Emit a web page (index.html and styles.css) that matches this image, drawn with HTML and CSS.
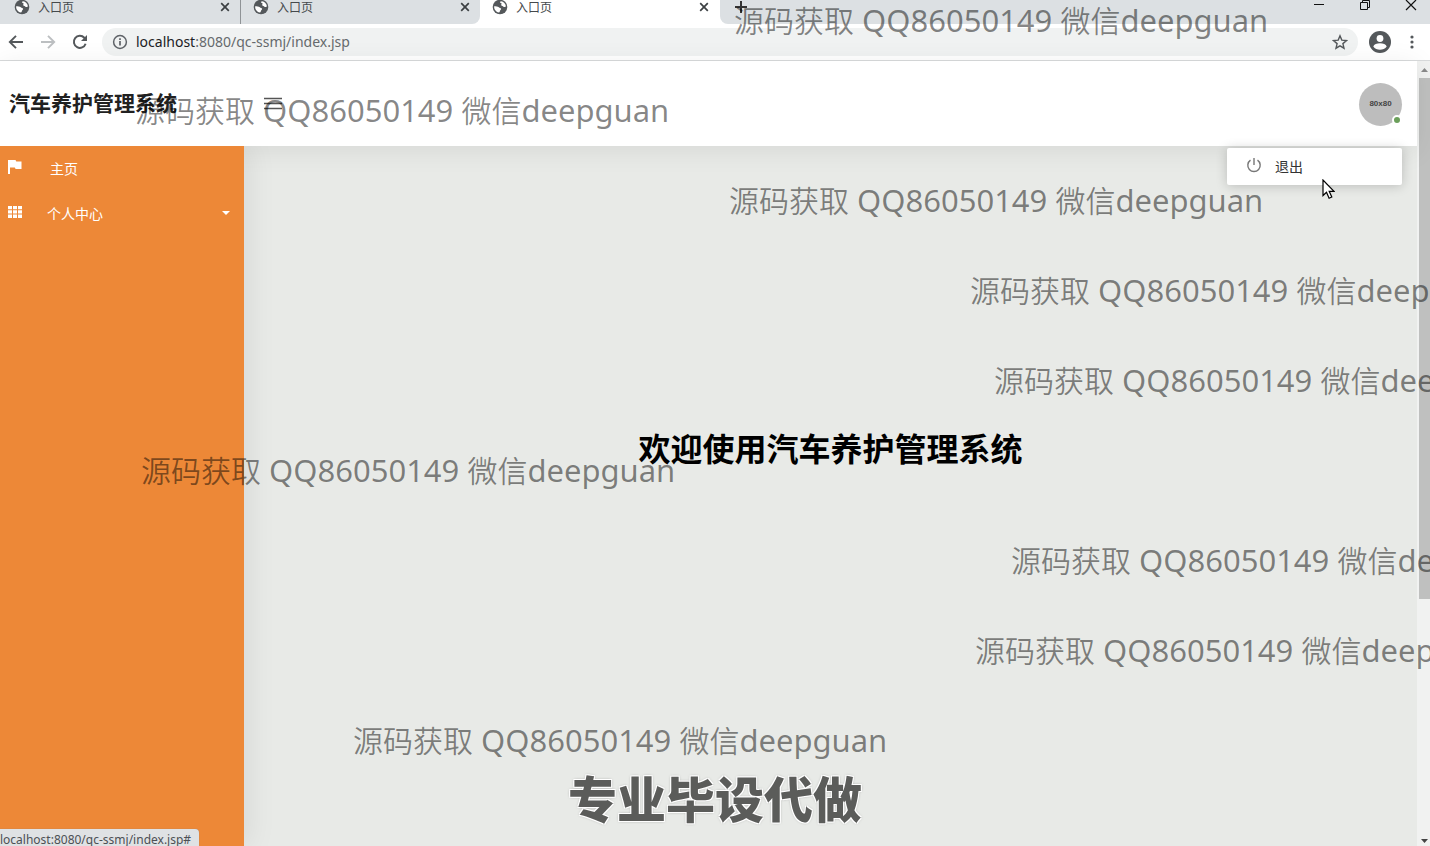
FILE: index.html
```html
<!DOCTYPE html>
<html lang="zh-CN">
<head>
<meta charset="utf-8">
<title>入口页</title>
<link rel="stylesheet" href="styles.css">
</head>
<body>
<svg class="defs" aria-hidden="true">
  <symbol id="globe" viewBox="0 0 16 16"><circle cx="8" cy="8" r="7.3" fill="#54585b"/><path d="M9 2.2c2.6.3 4.7 2.4 4.9 5-.8.9-1.7 1.2-2.5.5-.5-.7-1.5-.4-2-1.1-.6-.9.3-1.5.1-2.2-.2-.6-1.2-.2-1.4-.8C7.900 3 8.300 2.300 9 2.200zM2.200 7.200c1.600 0 3.700.1 4.600 1 .7.9 2 .7 2.300 1.600.2.900-.8 1.100-1.100 1.900-.2.700-.2 1.600-1.100 1.900C4.200 13.100 2.100 10.700 2.100 8z" fill="#fff"/></symbol>
  <symbol id="close" viewBox="0 0 10 10"><path d="M1.200 1.200l7.600 7.600M8.800 1.200L1.200 8.800" stroke="#3c4043" stroke-width="1.700"/></symbol>
</svg>
<div class="window">
  <div class="tabs">
    <div class="tab"><svg class="fav"><use href="#globe"/></svg><span class="name">入口页</span><button class="x" aria-label="关闭"><svg><use href="#close"/></svg></button></div>
    <div class="tab divided"><svg class="fav"><use href="#globe"/></svg><span class="name">入口页</span><button class="x" aria-label="关闭"><svg><use href="#close"/></svg></button></div>
    <div class="tab active"><svg class="fav"><use href="#globe"/></svg><span class="name">入口页</span><button class="x" aria-label="关闭"><svg><use href="#close"/></svg></button></div>
    <div class="rest">
      <button class="plus" aria-label="新标签页"><svg width="12" height="12" viewBox="0 0 12 12"><path d="M6 0v12M0 6h12" stroke="#333" stroke-width="2"/></svg></button>
      <div class="controls">
        <button aria-label="最小化"><svg width="12" height="12" viewBox="0 0 12 12"><path d="M1 5.500h10" stroke="#111"/></svg></button>
        <button aria-label="还原"><svg width="12" height="12" viewBox="0 0 12 12"><path d="M1.500 3.500h7v7h-7zM3.500 3V1.500h7v7H9" fill="none" stroke="#111"/></svg></button>
        <button aria-label="关闭窗口"><svg width="12" height="12" viewBox="0 0 12 12"><path d="M1 1l10 10M11 1L1 11" stroke="#111" stroke-width="1.200"/></svg></button>
      </div>
    </div>
  </div>
  <div class="toolbar">
    <button aria-label="后退"><svg width="16" height="16" viewBox="0 0 16 16"><path d="M15 8H2M8 1.800L1.800 8 8 14.200" fill="none" stroke="#54585b" stroke-width="1.900"/></svg></button>
    <button aria-label="前进"><svg width="16" height="16" viewBox="0 0 16 16"><path d="M1 8h13M8 1.800L14.200 8 8 14.200" fill="none" stroke="#bcbfc1" stroke-width="1.900"/></svg></button>
    <button aria-label="刷新"><svg width="16" height="16" viewBox="0 0 16 16"><path d="M13.600 9.700A6 6 0 1 1 12.300 3.800L14 5.500" fill="none" stroke="#54585b" stroke-width="2"/><path d="M15 1v6H9z" fill="#54585b"/></svg></button>
    <div class="omnibox">
      <svg width="16" height="16" viewBox="0 0 16 16"><circle cx="8" cy="8" r="6.400" fill="none" stroke="#5f6368" stroke-width="1.500"/><path d="M8 7v4.500M8 4.300v1.700" stroke="#5f6368" stroke-width="1.700"/></svg>
      <a class="url" href="#"><b>localhost</b>:8080/qc-ssmj/index.jsp</a>
      <button class="star" aria-label="收藏"><svg width="16" height="16" viewBox="0 0 16 16"><path d="M8 1.800l1.800 4.300 4.700.4-3.600 3.100 1.100 4.600L8 11.800l-4 2.400 1.100-4.600L1.500 6.500l4.700-.4z" fill="none" stroke="#54585b" stroke-width="1.400"/></svg></button>
    </div>
    <button class="person" aria-label="用户"><svg width="22" height="22" viewBox="0 0 22 22"><circle cx="11" cy="11" r="11" fill="#54585b"/><circle cx="11" cy="7.500" r="3.400" fill="#fff"/><path d="M4.300 15.500c1.200-4.300 12.200-4.300 13.400 0-2.800 4.300-10.600 4.300-13.400 0z" fill="#fff"/></svg></button>
    <button class="more" aria-label="菜单"><svg width="4" height="14" viewBox="0 0 4 14"><g fill="#54585b"><circle cx="2" cy="2" r="1.600"/><circle cx="2" cy="7" r="1.600"/><circle cx="2" cy="12" r="1.600"/></g></svg></button>
  </div>
  <div class="viewport">
    <div class="page">
      <header class="header">
        <h1>汽车养护管理系统</h1>
        <button class="burger" aria-label="切换菜单"><svg width="18" height="14" viewBox="0 0 18 14"><path d="M0 1.500h18M0 6.500h18M0 11.500h18" stroke="#555" stroke-width="1.500"/></svg></button>
        <div class="account">
          <button class="avatar">80x80</button>
          <i class="online"></i>
          <a class="logout" href="#"><svg width="16" height="16" viewBox="0 0 16 16"><path d="M4.500 2.200a6.200 6.200 0 1 0 7 0M8 0v7" fill="none" stroke="#777" stroke-width="1.400"/></svg>退出</a>
        </div>
      </header>
      <div class="body">
        <nav class="side">
          <a class="home" href="#"><svg width="14" height="14" viewBox="0 0 14 14"><path d="M0 0h7.500l.8 1.600H13.500V9H7.600l-.8-1.600H2V14H0z" fill="#fff"/></svg><span>主页</span></a>
          <a href="#"><svg width="14" height="14" viewBox="0 0 14 14"><path d="M0 1h4v3.300H0zM5 1h4v3.300H5zM10 1h4v3.300h-4zM0 5.300h4v3.300H0zM5 5.300h4v3.300H5zM10 5.300h4v3.300h-4zM0 9.600h4V13H0zM5 9.600h4V13H5zM10 9.600h4V13h-4z" fill="#fff"/></svg><span>个人中心</span><svg class="caret" width="8" height="4" viewBox="0 0 8 4"><path d="M0 0h8L4 4z" fill="#fff"/></svg></a>
        </nav>
        <main class="main"><h2>欢迎使用汽车养护管理系统</h2></main>
      </div>
    </div>
    <div class="scroll">
      <svg width="7" height="4" viewBox="0 0 7 4"><path d="M0 4h7L3.500 0z" fill="#8a8a8a"/></svg>
      <div class="track"><div class="thumb"></div></div>
      <svg width="7" height="4" viewBox="0 0 7 4"><path d="M0 0h7L3.500 4z" fill="#444"/></svg>
    </div>
  </div>
  <div class="status">localhost:8080/qc-ssmj/index.jsp#</div>
  <div class="marks">
    <p class="mark m1">源码获取<span> QQ86050149 </span>微信<span>deepguan</span></p>
    <p class="mark m2">源码获取<span> QQ86050149 </span>微信<span>deepguan</span></p>
    <p class="mark m3">源码获取<span> QQ86050149 </span>微信<span>deepguan</span></p>
    <p class="mark m4">源码获取<span> QQ86050149 </span>微信<span>deepguan</span></p>
    <p class="mark m5">源码获取<span> QQ86050149 </span>微信<span>deepguan</span></p>
    <p class="mark m6">源码获取<span> QQ86050149 </span>微信<span>deepguan</span></p>
    <p class="mark m7">源码获取<span> QQ86050149 </span>微信<span>deepguan</span></p>
    <p class="mark m8">源码获取<span> QQ86050149 </span>微信<span>deepguan</span></p>
    <p class="mark m9">源码获取<span> QQ86050149 </span>微信<span>deepguan</span></p>
    <p class="caption">专业毕设代做</p>
    <svg class="cursor" width="13" height="21" viewBox="0 0 13 21"><path d="M1 1v15.500l3.500-3.300 2.600 6 2.700-1.200-2.600-5.700H12z" fill="#fff" stroke="#000" stroke-width="1.200"/></svg>
  </div>
</div>
</body>
</html>
```

FILE: styles.css
```css
* { box-sizing: border-box; }
body { margin: 0; font-family: "Noto Sans", "Noto Sans CJK SC", sans-serif; }
button { border: 0; padding: 0; background: none; font: inherit; display: flex; align-items: center; justify-content: center; }
a { color: inherit; text-decoration: none; }
h1, h2, p { margin: 0; }
.defs { position: absolute; width: 0; height: 0; }
.window { position: relative; height: 100vh; display: flex; flex-direction: column; overflow: hidden; background: #fff; }

/* browser frame */
.tabs { display: flex; height: 24px; flex: none; background: #fff; }
.tab { width: 240px; flex: none; display: flex; align-items: center; padding: 0 10px 10px 14px; background: #dce0e3; font-size: 12px; line-height: 14px; color: #45494c; }
.divided { padding-left: 13px; border-radius: 0 0 8px 0; box-shadow: inset 2px 0 0 -1px #8f9396; }
.active { padding: 0 11px 10px 12px; background: #fff; }
.fav { width: 16px; height: 16px; margin-right: 8px; flex: none; }
.name { flex: 1; padding-top: 1px; }
.x, .x svg { width: 10px; height: 10px; }
.rest { flex: 1; display: flex; justify-content: space-between; align-items: flex-start; padding-left: 15px; background: #dce0e3; border-radius: 0 0 0 8px; }
.plus { height: 14px; }
.controls { display: flex; gap: 34px; padding-right: 13px; }
.controls button { height: 10px; }
.toolbar { height: 37px; flex: none; display: flex; align-items: center; gap: 16px; padding: 0 16px 0 8px; border-bottom: 1px solid #d8dadb; background: #fff; }
.omnibox { flex: 1; height: 28px; display: flex; align-items: center; gap: 8px; margin-left: -2px; padding: 0 10px; border-radius: 14px; background: #f0f2f2; }
.url { flex: 1; font-size: 14px; line-height: 20px; color: #666a6d; }
.url b { font-weight: 400; color: #202124; }
.person { margin: 0 3px 0 -5px; }

/* page */
.viewport { flex: 1; min-height: 0; display: flex; }
.page { flex: 1; min-width: 0; display: flex; flex-direction: column; }
.header { position: relative; z-index: 2; height: 85px; flex: none; display: flex; align-items: center; padding: 1px 15px 0 9px; background: #fff; box-shadow: 0 4px 28px rgba(0, 0, 0, .08); }
.header h1 { padding-bottom: 2px; font-size: 21px; line-height: 30px; font-weight: 700; color: #212121; }
.burger { margin-left: 87px; }
.account { position: relative; margin-left: auto; }
.avatar { width: 43px; height: 43px; border-radius: 50%; background: #bdbdbd; color: #444; font: 700 8px/10px "Liberation Sans", sans-serif; }
.online { position: absolute; right: 0; bottom: 1px; width: 10px; height: 10px; border: 2px solid #fff; border-radius: 50%; background: #6b9f5a; }
.logout { position: absolute; top: 65px; right: 0; width: 175px; height: 37px; display: flex; align-items: center; gap: 13px; padding-left: 19px; border-radius: 2px; background: #fff; box-shadow: 0 1px 12px rgba(0, 0, 0, .2); font-size: 14px; color: #333; }
.body { flex: 1; min-height: 0; display: flex; }
.side { position: relative; z-index: 3; width: 244px; flex: none; background: #ed8837; color: #fff; font-size: 14px; line-height: 20px; box-shadow: 4px 0 28px rgba(0, 0, 0, .08); clip-path: inset(0 -40px 0 0); }
.side a { height: 45px; display: flex; align-items: center; gap: 25px; padding: 0 14px 0 8px; }
.side .home { gap: 28px; }
.side a > svg:first-child { margin-bottom: 3px; }
.side .caret { margin: 0 0 2px auto; }
.main { flex: 1; display: flex; align-items: center; justify-content: center; padding-bottom: 95px; background: #e8eae7; }
.main h2 { font-size: 32px; line-height: 48px; font-weight: 700; color: #000; }
.scroll { width: 13px; flex: none; display: flex; flex-direction: column; align-items: center; padding: 7px 0 3px 2px; gap: 6px; background: #f1f2f1; }
.track { flex: 1; width: 100%; }
.thumb { height: 69%; background: #bfc0bf; }

/* layers over the page */
.status { position: absolute; z-index: 4; left: 0; bottom: 0; height: 17px; padding: 3px 8px 0 0; border-radius: 0 4px 0 0; background: #dfe2e4; box-shadow: 0 0 1px #888; font-size: 12px; line-height: 16px; color: #4c5054; }
.marks { position: absolute; z-index: 5; inset: 0; overflow: hidden; pointer-events: none; }
.mark { position: absolute; font-size: 30px; line-height: 40px; white-space: pre; font-family: "Noto Sans CJK SC DemiLight", "Noto Sans CJK SC", sans-serif; font-weight: 350; color: rgba(0, 0, 0, .48); }
.mark span { font-family: "Noto Sans", sans-serif; font-size: 31px; font-weight: 400; }
.m1 { left: 734px; top: -1px; }
.m2 { left: 135px; top: 89px; }
.m3 { left: 729px; top: 179px; }
.m4 { left: 970px; top: 269px; }
.m5 { left: 994px; top: 359px; }
.m6 { left: 141px; top: 449px; }
.m7 { left: 1011px; top: 539px; }
.m8 { left: 975px; top: 629px; }
.m9 { left: 353px; top: 719px; }
.caption { position: absolute; left: 568px; top: 762px; font-size: 49px; line-height: 70px; font-weight: 900; font-family: "Noto Sans CJK SC", sans-serif; color: #5b5c5a; text-shadow: -1px -1px #fff, 1px -1px #fff, -1px 1px #fff, 1px 1px #fff, 0 0 3px #777; }
.cursor { position: absolute; left: 1322px; top: 179px; }
```
